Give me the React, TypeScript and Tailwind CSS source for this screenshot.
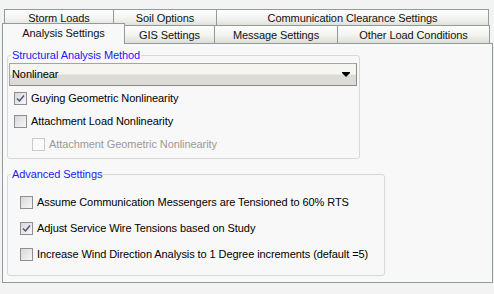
import React from 'react';

const row1 = [
  { label: 'Storm Loads', w: 'w-[110px]' },
  { label: 'Soil Options', w: 'w-[104px]' },
  { label: 'Communication Clearance Settings', w: 'w-[273px]' },
];

const row2 = [
  { label: 'Analysis Settings', w: 'w-[123px]', active: true },
  { label: 'GIS Settings', w: 'w-[91px]' },
  { label: 'Message Settings', w: 'w-[124px]' },
  { label: 'Other Load Conditions', w: 'w-[153px]' },
];

function Tab({ label, w, active }: { label: string; w: string; active?: boolean }) {
  if (active) {
    return (
      <div className={`${w} -mt-[2px] h-[21px] relative z-10 border border-b-0 border-[#919b9c] bg-[#f8f8f8] flex items-center justify-center pb-[2px] text-[#111]`}>
        {label}
      </div>
    );
  }
  return (
    <div className={`${w} -ml-px first:ml-0 border border-b-0 border-[#919b9c] bg-linear-to-b from-[#fdfdfd] via-[#f4f4f2] to-[#deded8] flex items-center justify-center pt-px text-[#111]`}>
      {label}
    </div>
  );
}

function Check({ checked, disabled }: { checked?: boolean; disabled?: boolean }) {
  return (
    <div
      className={`w-[13px] h-[13px] shrink-0 border flex items-center justify-center ${
        disabled
          ? 'border-[#c9c9c9] bg-[#fbfbfb]'
          : 'border-[#8f8f8f] bg-linear-to-br from-[#d8d8d8] to-[#f7f7f7]'
      }`}
    >
      {checked && (
        <svg width="9" height="9" viewBox="0 0 9 9">
          <path d="M1 4.5 L3.5 7 L8 1.5" fill="none" stroke="#4a5680" strokeWidth="1.5" />
        </svg>
      )}
    </div>
  );
}

function Option({ label, checked, disabled, h, pl }: { label: string; checked?: boolean; disabled?: boolean; h: string; pl: string }) {
  return (
    <div className={`flex items-center gap-[4px] ${h} ${pl}`}>
      <Check checked={checked} disabled={disabled} />
      <span className={disabled ? 'text-[#9a9a9a]' : 'text-black'}>{label}</span>
    </div>
  );
}

export default function App() {
  return (
    <div className="w-[494px] h-[294px] bg-[#f3f3f3] pt-[9px] font-['Liberation_Sans',Arial,sans-serif] text-[11px] leading-[13px] tracking-[-0.08px] overflow-hidden">
      <div className="flex ml-[4px] h-[17px]">
        {row1.map((t) => (
          <Tab key={t.label} label={t.label} w={t.w} />
        ))}
      </div>
      <div className="flex ml-[2px] h-[18px] -mt-px">
        {row2.map((t) => (
          <Tab key={t.label} label={t.label} w={t.w} active={t.active} />
        ))}
      </div>

      <div className="ml-[2px] w-[491px] h-[240px] border border-[#919b9c] bg-[#f8f8f8] pl-[4px] pt-[5px]">
        <fieldset className="w-[353px] border border-[#d6d9dc] rounded-[3px] pb-[2px]">
          <legend className="ml-[3px] px-[1px] text-[#1a1aff]">Structural Analysis Method</legend>
          <div className="ml-[1px] mt-px w-[348px] h-[23px] border border-[#a4a4a4] border-r-[#8a8a8a] border-b-[#8a8a8a] bg-linear-to-b from-[#f5f5f1] from-45% to-[#dcdbd5] to-55% flex items-center justify-between pl-[2px] pr-[6px]">
            <span className="text-black">Nonlinear</span>
            <svg width="8" height="6" viewBox="0 0 8 6">
              <path d="M0 0 H8 V1 L4 5 L0 1 Z" fill="#000" />
            </svg>
          </div>
          <Option label="Guying Geometric Nonlinearity" checked h="h-[23px]" pl="pl-[6px] mt-px" />
          <Option label="Attachment Load Nonlinearity" h="h-[23px]" pl="pl-[6px]" />
          <Option label="Attachment Geometric Nonlinearity" disabled h="h-[23px]" pl="pl-[24px]" />
        </fieldset>

        <fieldset className="w-[378px] mt-[9px] border border-[#d6d9dc] rounded-[3px] pt-[8px] pb-[8px]">
          <legend className="ml-[3px] px-[1px] text-[#1a1aff]">Advanced Settings</legend>
          <Option label="Assume Communication Messengers are Tensioned to 60% RTS" h="h-[26px]" pl="pl-[12px]" />
          <Option label="Adjust Service Wire Tensions based on Study" checked h="h-[26px]" pl="pl-[12px]" />
          <Option label="Increase Wind Direction Analysis to 1 Degree increments (default =5)" h="h-[26px]" pl="pl-[12px]" />
        </fieldset>
      </div>
    </div>
  );
}
